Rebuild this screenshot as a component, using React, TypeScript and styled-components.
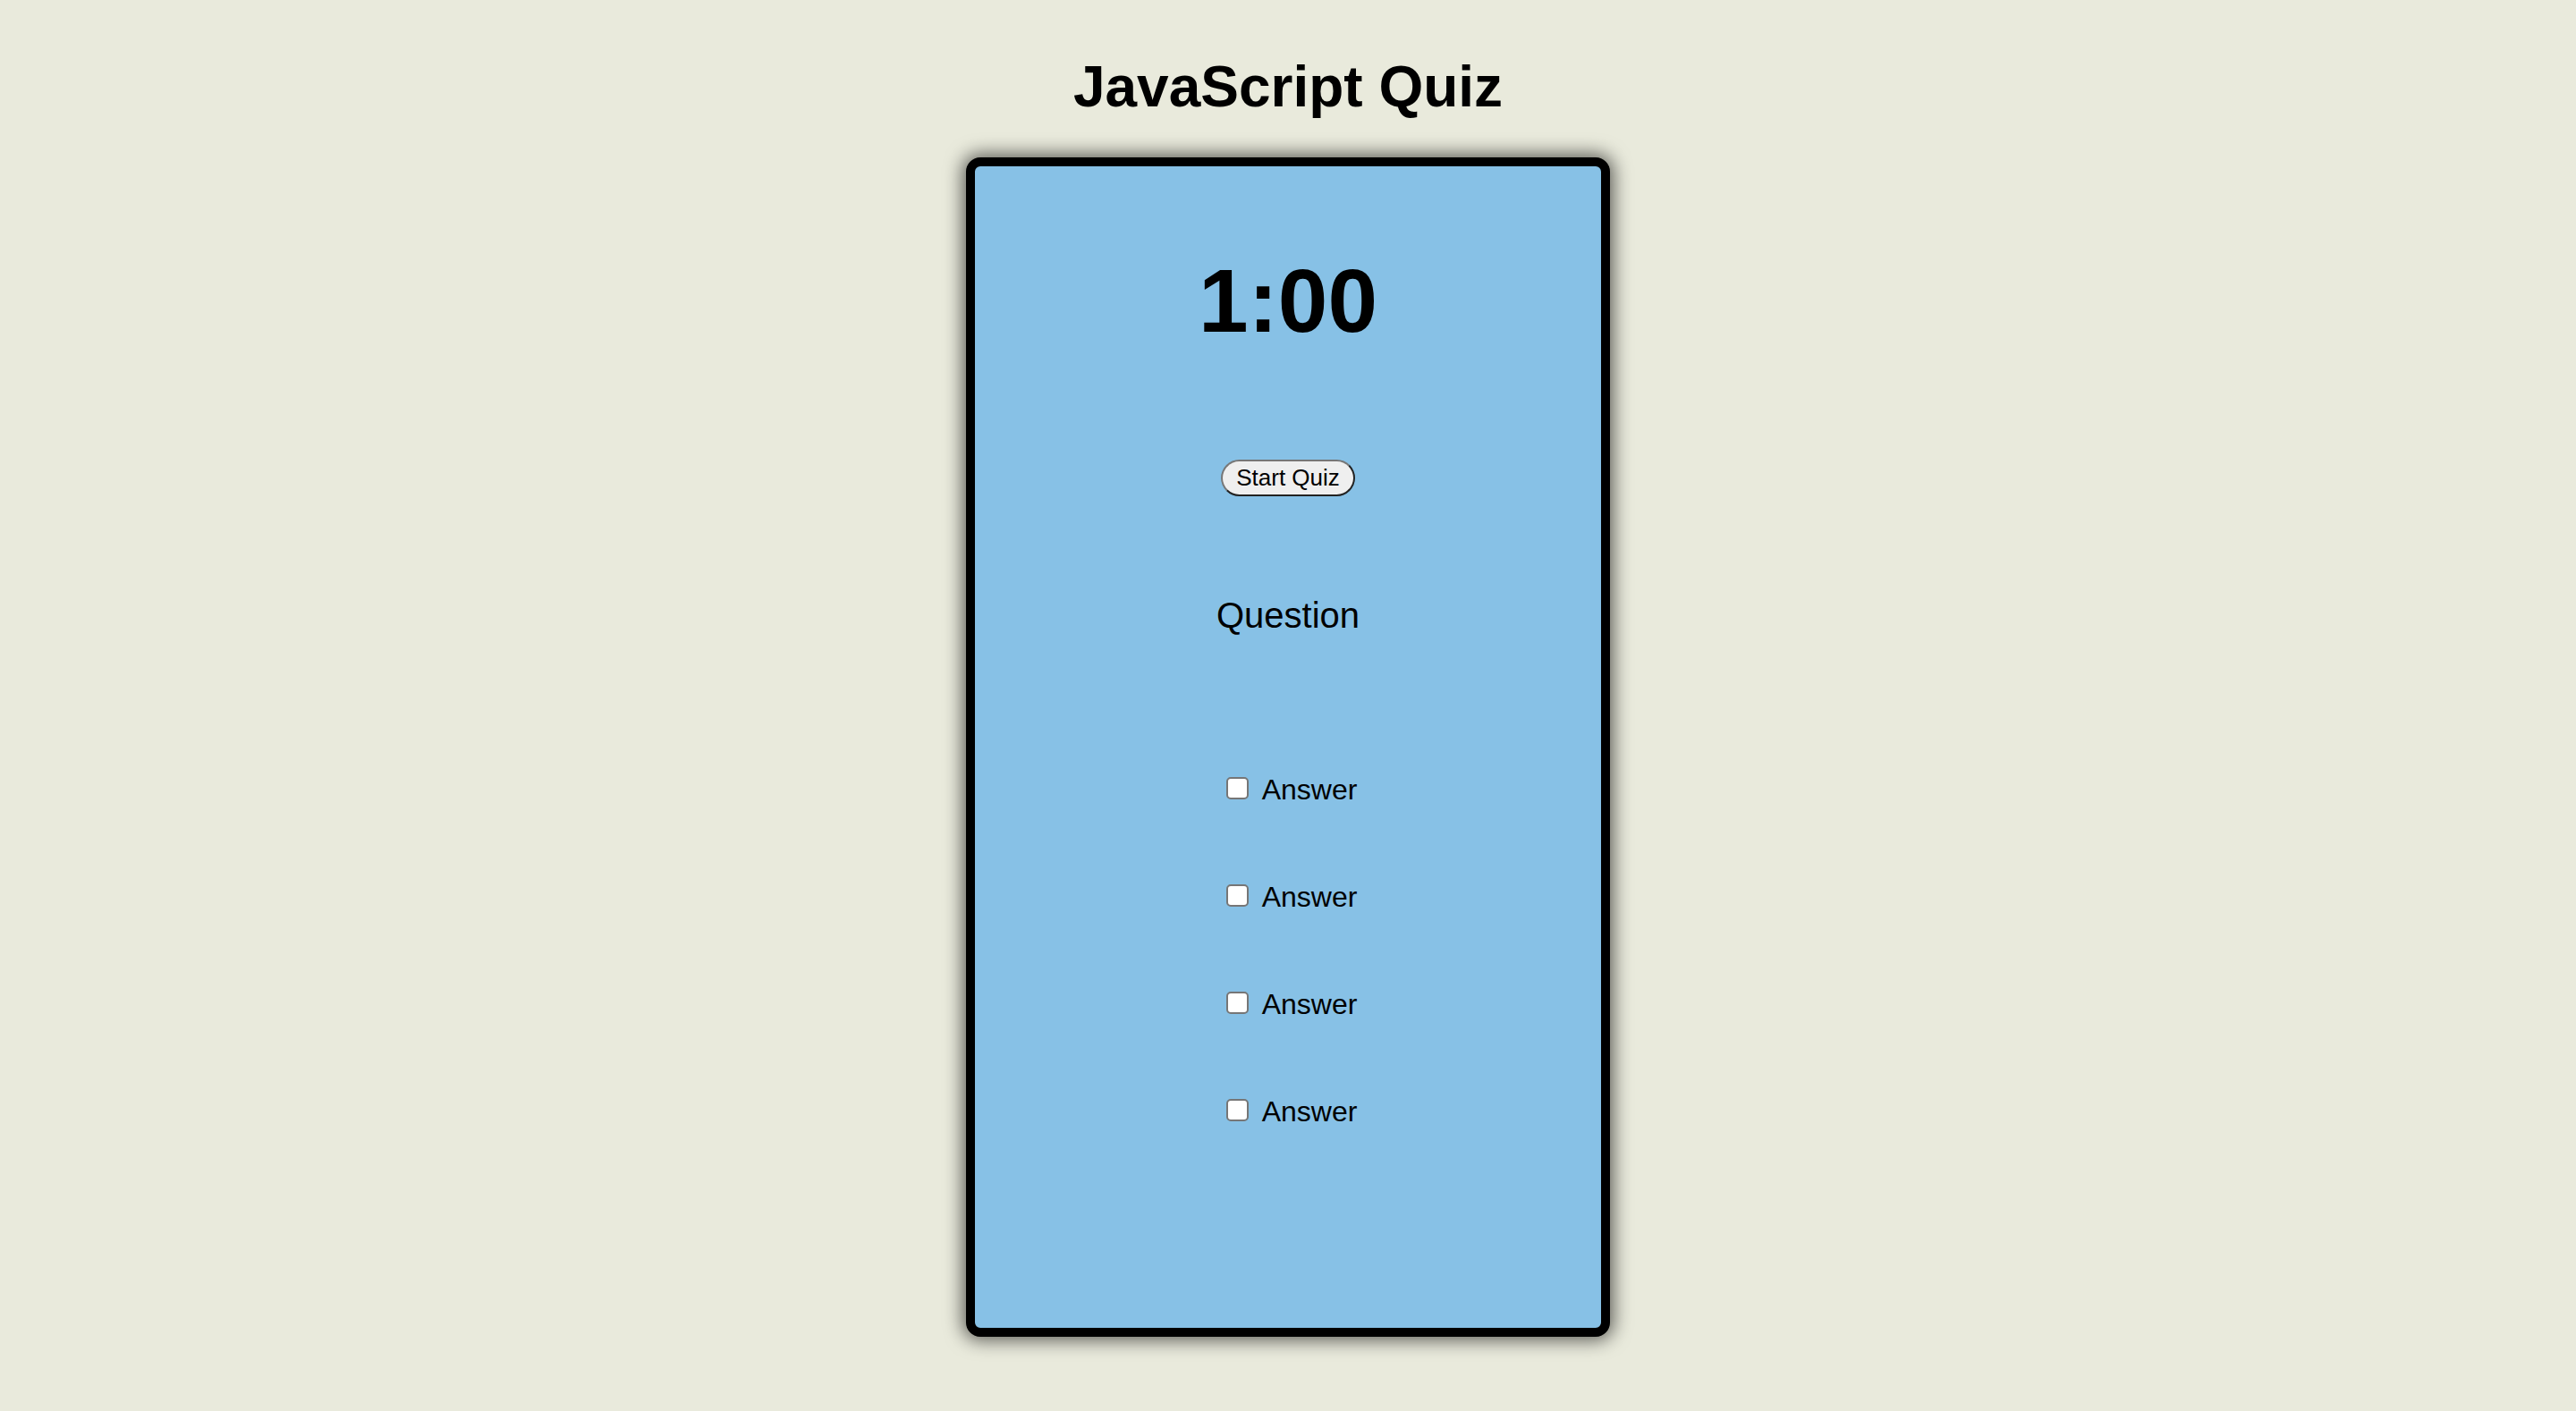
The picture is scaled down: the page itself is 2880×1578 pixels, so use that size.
import React from "react";
import styled, { createGlobalStyle } from "styled-components";

const GlobalStyle = createGlobalStyle`
  html, body {
    margin: 0;
    padding: 0;
    background: #e9eadc;
  }
  body {
    font-family: "Liberation Sans", Arial, Helvetica, sans-serif;
    color: #000;
  }
`;

const Page = styled.main`
  min-height: 100vh;
  display: flex;
  flex-direction: column;
  align-items: center;
  padding-top: 60px;
  box-sizing: border-box;
  background: #e9eadc;
`;

const Title = styled.h1`
  margin: 0;
  font-size: 64px;
  line-height: 74px;
  font-weight: 700;
  font-family: "Liberation Sans", Arial, Helvetica, sans-serif;
`;

const Card = styled.section`
  margin-top: 42px;
  width: 720px;
  height: 1319px;
  box-sizing: border-box;
  border: 10px solid #000;
  border-radius: 16px;
  background: #87c1e6;
  box-shadow: 0 0 20px 4px rgba(0, 0, 0, 0.6);
  display: flex;
  flex-direction: column;
  align-items: center;
  padding-top: 92px;
`;

const Timer = styled.div`
  font-size: 100px;
  line-height: 116px;
  font-weight: 700;
`;

const StartButton = styled.button`
  margin-top: 120px;
  height: 41px;
  box-sizing: border-box;
  padding: 4px 15px;
  font-family: "Liberation Sans", Arial, Helvetica, sans-serif;
  font-size: 26px;
  line-height: 29px;
  color: #000;
  background: #efefef;
  border: 2px solid;
  border-color: #777 #222 #222 #777;
  border-radius: 21px;
  cursor: pointer;
`;

const Question = styled.h2`
  margin: 110px 0 0;
  font-size: 40px;
  line-height: 46px;
  font-weight: 400;
`;

const AnswerList = styled.div`
  margin-top: 154px;
  display: flex;
  flex-direction: column;
  align-items: center;
  gap: 83px;
`;

const AnswerRow = styled.label`
  display: flex;
  align-items: center;
  gap: 15px;
  height: 37px;
  font-size: 32px;
  line-height: 37px;
`;

const Check = styled.input`
  appearance: none;
  -webkit-appearance: none;
  width: 25px;
  height: 25px;
  margin: 0 0 4px 8px;
  box-sizing: border-box;
  border: 2px solid #767676;
  border-radius: 5px;
  background: #fff;
`;

export default function App() {
  const answers = ["Answer", "Answer", "Answer", "Answer"];
  return (
    <>
      <GlobalStyle />
      <Page>
        <Title>JavaScript Quiz</Title>
        <Card>
          <Timer>1:00</Timer>
          <StartButton type="button">Start Quiz</StartButton>
          <Question>Question</Question>
          <AnswerList>
            {answers.map((a, i) => (
              <AnswerRow key={i}>
                <Check type="checkbox" />
                <span>{a}</span>
              </AnswerRow>
            ))}
          </AnswerList>
        </Card>
      </Page>
    </>
  );
}
